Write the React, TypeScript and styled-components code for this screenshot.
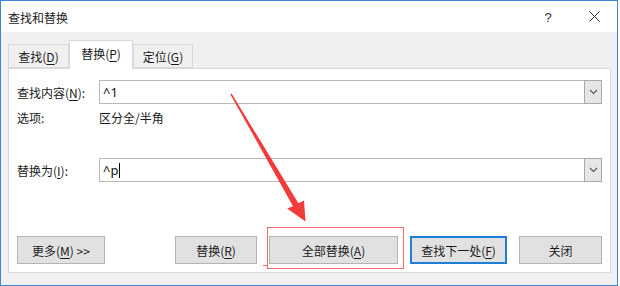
import * as React from "react";
import styled, { createGlobalStyle } from "styled-components";

const GlobalStyle = createGlobalStyle`
  html, body {
    margin: 0;
    padding: 0;
    background: #ffffff;
  }
  body {
    font-family: "Noto Sans CJK SC", "Noto Sans", "Liberation Sans", sans-serif;
    font-size: 12px;
    color: #1e1e1e;
  }
`;

function App(): JSX.Element {
  return (
    <>
      <GlobalStyle />
      <Window>
        <TitleBar>
          <Title>查找和替换</Title>
          <TitleButton>
            <HelpGlyph>?</HelpGlyph>
          </TitleButton>
          <TitleButton>
            <svg width="11" height="11" viewBox="0 0 11 11">
              <path d="M0.5 0.5 L10.5 10.5 M10.5 0.5 L0.5 10.5" stroke="#2b2b2b" strokeWidth="1" />
            </svg>
          </TitleButton>
        </TitleBar>

        <Tabs>
          <Tab $width={61}>
            查找(<u>D</u>)
          </Tab>
          <Tab $width={64} $active>
            替换(<u>P</u>)
          </Tab>
          <Tab $width={60}>
            定位(<u>G</u>)
          </Tab>
        </Tabs>

        <Panel>
          <FormRow $top={11}>
            <Label>
              查找内容(<u>N</u>):
            </Label>
            <Combo>
              <ComboText>^1</ComboText>
              <DropButton>
                <Chevron />
              </DropButton>
            </Combo>
          </FormRow>

          <OptionRow>
            <Label>选项:</Label>
            <OptionValue>区分全/半角</OptionValue>
          </OptionRow>

          <FormRow $top={32}>
            <Label>
              替换为(<u>I</u>):
            </Label>
            <Combo>
              <ComboText>
                ^p<Caret />
              </ComboText>
              <DropButton>
                <Chevron />
              </DropButton>
            </Combo>
          </FormRow>

          <ButtonRow>
            <Button $width={88}>
              更多(<u>M</u>) &gt;&gt;
            </Button>
            <ButtonGroup>
              <Button $width={82}>
                替换(<u>R</u>)
              </Button>
              <Button $width={129}>
                全部替换(<u>A</u>)
              </Button>
              <Button $width={97} $primary>
                查找下一处(<u>F</u>)
              </Button>
              <Button $width={83}>关闭</Button>
            </ButtonGroup>
          </ButtonRow>
        </Panel>

        <Highlight />
        <HighlightTail />
        <Arrow width="620" height="286" viewBox="0 0 620 286">
          <polygon
            points="230.4,94.4 231.6,93.6 298.4,203.2 304,200.4 305.5,221.5 287.2,208.4 293,206.2"
            fill="#f23b3b"
          />
        </Arrow>
      </Window>
    </>
  );
}

function Chevron(): JSX.Element {
  return (
    <svg width="9" height="6" viewBox="0 0 9 6">
      <path d="M1 1 L4.5 4.5 L8 1" fill="none" stroke="#555" strokeWidth="1.1" />
    </svg>
  );
}

const Window = styled.div`
  position: relative;
  box-sizing: border-box;
  width: 618px;
  height: 286px;
  border: 1px solid #3b86d4;
  background: #f0f0f0;
  display: flex;
  flex-direction: column;
`;

const TitleBar = styled.div`
  height: 31px;
  background: #ffffff;
  display: flex;
  align-items: center;
  padding-left: 7px;
  flex-shrink: 0;
`;

const Title = styled.div`
  flex: 1;
  font-size: 12px;
  color: #1a1a1a;
  padding-top: 1px;
`;

const TitleButton = styled.div`
  width: 46px;
  height: 31px;
  display: flex;
  align-items: center;
  justify-content: center;
`;

const HelpGlyph = styled.span`
  font-family: "Liberation Sans", sans-serif;
  font-size: 13px;
  color: #2b2b2b;
  margin-top: 1px;
`;

const Tabs = styled.div`
  height: 36px;
  display: flex;
  align-items: flex-end;
  padding-left: 7px;
  flex-shrink: 0;
  position: relative;
  z-index: 1;
`;

const Tab = styled.div<{ $width: number; $active?: boolean }>`
  box-sizing: border-box;
  width: ${(p) => p.$width}px;
  height: ${(p) => (p.$active ? 29 : 24)}px;
  margin-bottom: ${(p) => (p.$active ? -1 : 0)}px;
  background: ${(p) => (p.$active ? "#ffffff" : "#f0f0f0")};
  border: 1px solid #d9d9d9;
  border-bottom: ${(p) => (p.$active ? "none" : "1px solid #d9d9d9")};
  display: flex;
  align-items: center;
  justify-content: center;
  padding-bottom: ${(p) => (p.$active ? 3 : 0)}px;
  font-size: 12px;
  color: #1a1a1a;
  u {
    text-underline-offset: 2px;
  }
`;

const Panel = styled.div`
  box-sizing: border-box;
  margin-left: 7px;
  width: 603px;
  height: 205px;
  background: #ffffff;
  border: 1px solid #d9d9d9;
  padding: 0 8px;
  display: flex;
  flex-direction: column;
`;

const FormRow = styled.div<{ $top: number }>`
  margin-top: ${(p) => p.$top}px;
  display: flex;
  align-items: center;
  height: 24px;
`;

const Label = styled.div`
  width: 82px;
  flex-shrink: 0;
  font-size: 12px;
  color: #1a1a1a;
  u {
    text-underline-offset: 2px;
  }
`;

const Combo = styled.div`
  box-sizing: border-box;
  flex: 1;
  height: 24px;
  border: 1px solid #b9b9b9;
  display: flex;
  align-items: stretch;
  background: #ffffff;
`;

const ComboText = styled.div`
  flex: 1;
  display: flex;
  align-items: center;
  padding-left: 3px;
  font-family: "Noto Sans", "Liberation Sans", sans-serif;
  font-size: 13px;
  color: #111;
`;

const Caret = styled.span`
  display: inline-block;
  width: 1px;
  height: 15px;
  background: #000;
  margin-left: 1px;
`;

const DropButton = styled.div`
  box-sizing: border-box;
  width: 18px;
  margin: -1px -1px -1px 0;
  border: 1px solid #a9a9a9;
  background: #e6e6e6;
  display: flex;
  align-items: center;
  justify-content: center;
`;

const OptionRow = styled.div`
  margin-top: 4px;
  height: 18px;
  display: flex;
  align-items: center;
`;

const OptionValue = styled.div`
  font-size: 12px;
  color: #1a1a1a;
`;

const ButtonRow = styled.div`
  margin-top: 54px;
  display: flex;
  justify-content: space-between;
`;

const ButtonGroup = styled.div`
  display: flex;
  gap: 12px;
`;

const Button = styled.div<{ $width: number; $primary?: boolean }>`
  box-sizing: border-box;
  width: ${(p) => p.$width}px;
  height: 28px;
  background: #e1e1e1;
  border: 1px solid ${(p) => (p.$primary ? "#1f7fd6" : "#b4b4b4")};
  box-shadow: ${(p) => (p.$primary ? "inset 0 0 0 1px #1f7fd6" : "none")};
  display: flex;
  align-items: center;
  justify-content: center;
  font-size: 12px;
  color: #1a1a1a;
  u {
    text-underline-offset: 2px;
  }
`;

const Highlight = styled.div`
  position: absolute;
  left: 266px;
  top: 226px;
  width: 137px;
  height: 42px;
  box-sizing: border-box;
  border: 1px solid #ec6b6b;
  pointer-events: none;
`;

const HighlightTail = styled.div`
  position: absolute;
  left: 262px;
  top: 264px;
  width: 5px;
  height: 1px;
  background: #ec6b6b;
`;

const Arrow = styled.svg`
  position: absolute;
  left: -1px;
  top: -1px;
  pointer-events: none;
`;

export default App;
